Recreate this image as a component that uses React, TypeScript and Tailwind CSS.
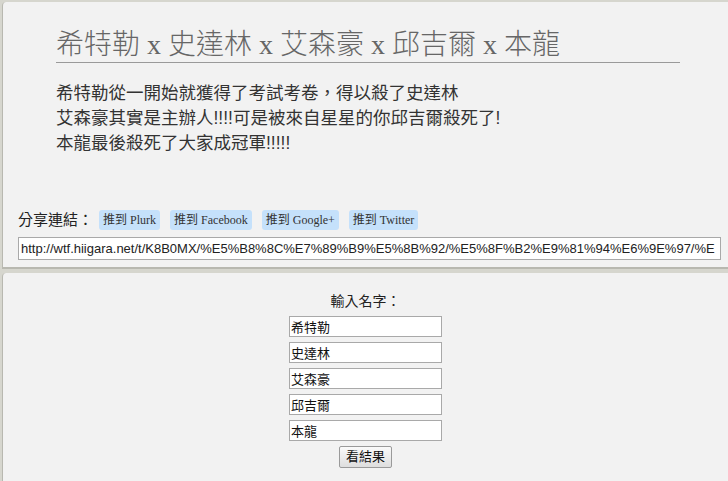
const shares = ["Plurk", "Facebook", "Google+", "Twitter"];
const names = ["希特勒", "史達林", "艾森豪", "邱吉爾", "本龍"];

const sans = "font-['Liberation_Sans','Noto_Sans_CJK_TC',sans-serif]";
const serif = "font-['Liberation_Serif','Noto_Sans_CJK_TC',serif]";

export default function App() {
  return (
    <div className={`min-h-[481px] bg-[#d6d6ce] pt-[2px] pl-[2px] overflow-hidden ${sans}`}>
      {/* result panel */}
      <section className="h-[267px] bg-[#f2f2f2] border-l border-b-2 border-[#b8b8b0] rounded-tl-[4px] pl-[15px] pt-[26px]">
        <h1
          className={`ml-[38px] mr-[48px] border-b border-[#9a9a9a] text-[28px] leading-[34px] text-[#666] font-light ${serif}`}
        >
          希特勒 x 史達林 x 艾森豪 x 邱吉爾 x 本龍
        </h1>
        <div className="ml-[38px] mt-[18px] text-[17.5px] leading-[25px] text-[#333]">
          <p>希特勒從一開始就獲得了考試考卷，得以殺了史達林</p>
          <p>艾森豪其實是主辦人!!!!可是被來自星星的你邱吉爾殺死了!</p>
          <p>本龍最後殺死了大家成冠軍!!!!!</p>
        </div>

        <div className="mt-[53px] flex items-center gap-[10px]">
          <span className="text-[15px] text-[#222] mr-[-4px]">分享連結：</span>
          {shares.map((s) => (
            <span
              key={s}
              className={`bg-[#c5e1fb] rounded-[3px] px-[4px] h-[20px] leading-[20px] text-[12px] text-[#333] ${serif}`}
            >
              推到 {s}
            </span>
          ))}
        </div>
        <div className="mt-[5px] mr-[7px] h-[23px] border border-[#a9a9a9] bg-white px-[2px] text-[13px] leading-[21px] text-[#222] whitespace-nowrap overflow-hidden">
          http://wtf.hiigara.net/t/K8B0MX/%E5%B8%8C%E7%89%B9%E5%8B%92/%E5%8F%B2%E9%81%94%E6%9E%97/%E
        </div>
      </section>

      {/* input panel */}
      <section className="mt-[4px] h-[210px] bg-[#f2f2f2] border-l border-[#b8b8b0] rounded-tl-[4px] flex flex-col items-center pt-[18px]">
        <div className="text-[14px] leading-[20px] text-[#222]">輸入名字：</div>
        <div className="mt-[5px] flex flex-col gap-[5px]">
          {names.map((n) => (
            <input
              key={n}
              defaultValue={n}
              className="w-[153px] h-[21px] border border-[#a9a9a9] bg-white px-[1px] text-[13px] text-[#111] outline-none"
            />
          ))}
        </div>
        <button className="mt-[5px] h-[22px] px-[6px] border border-[#9a9a9a] rounded-[2px] bg-gradient-to-b from-[#fafafa] to-[#dedede] text-[13px] text-[#111]">
          看結果
        </button>
      </section>
    </div>
  );
}
